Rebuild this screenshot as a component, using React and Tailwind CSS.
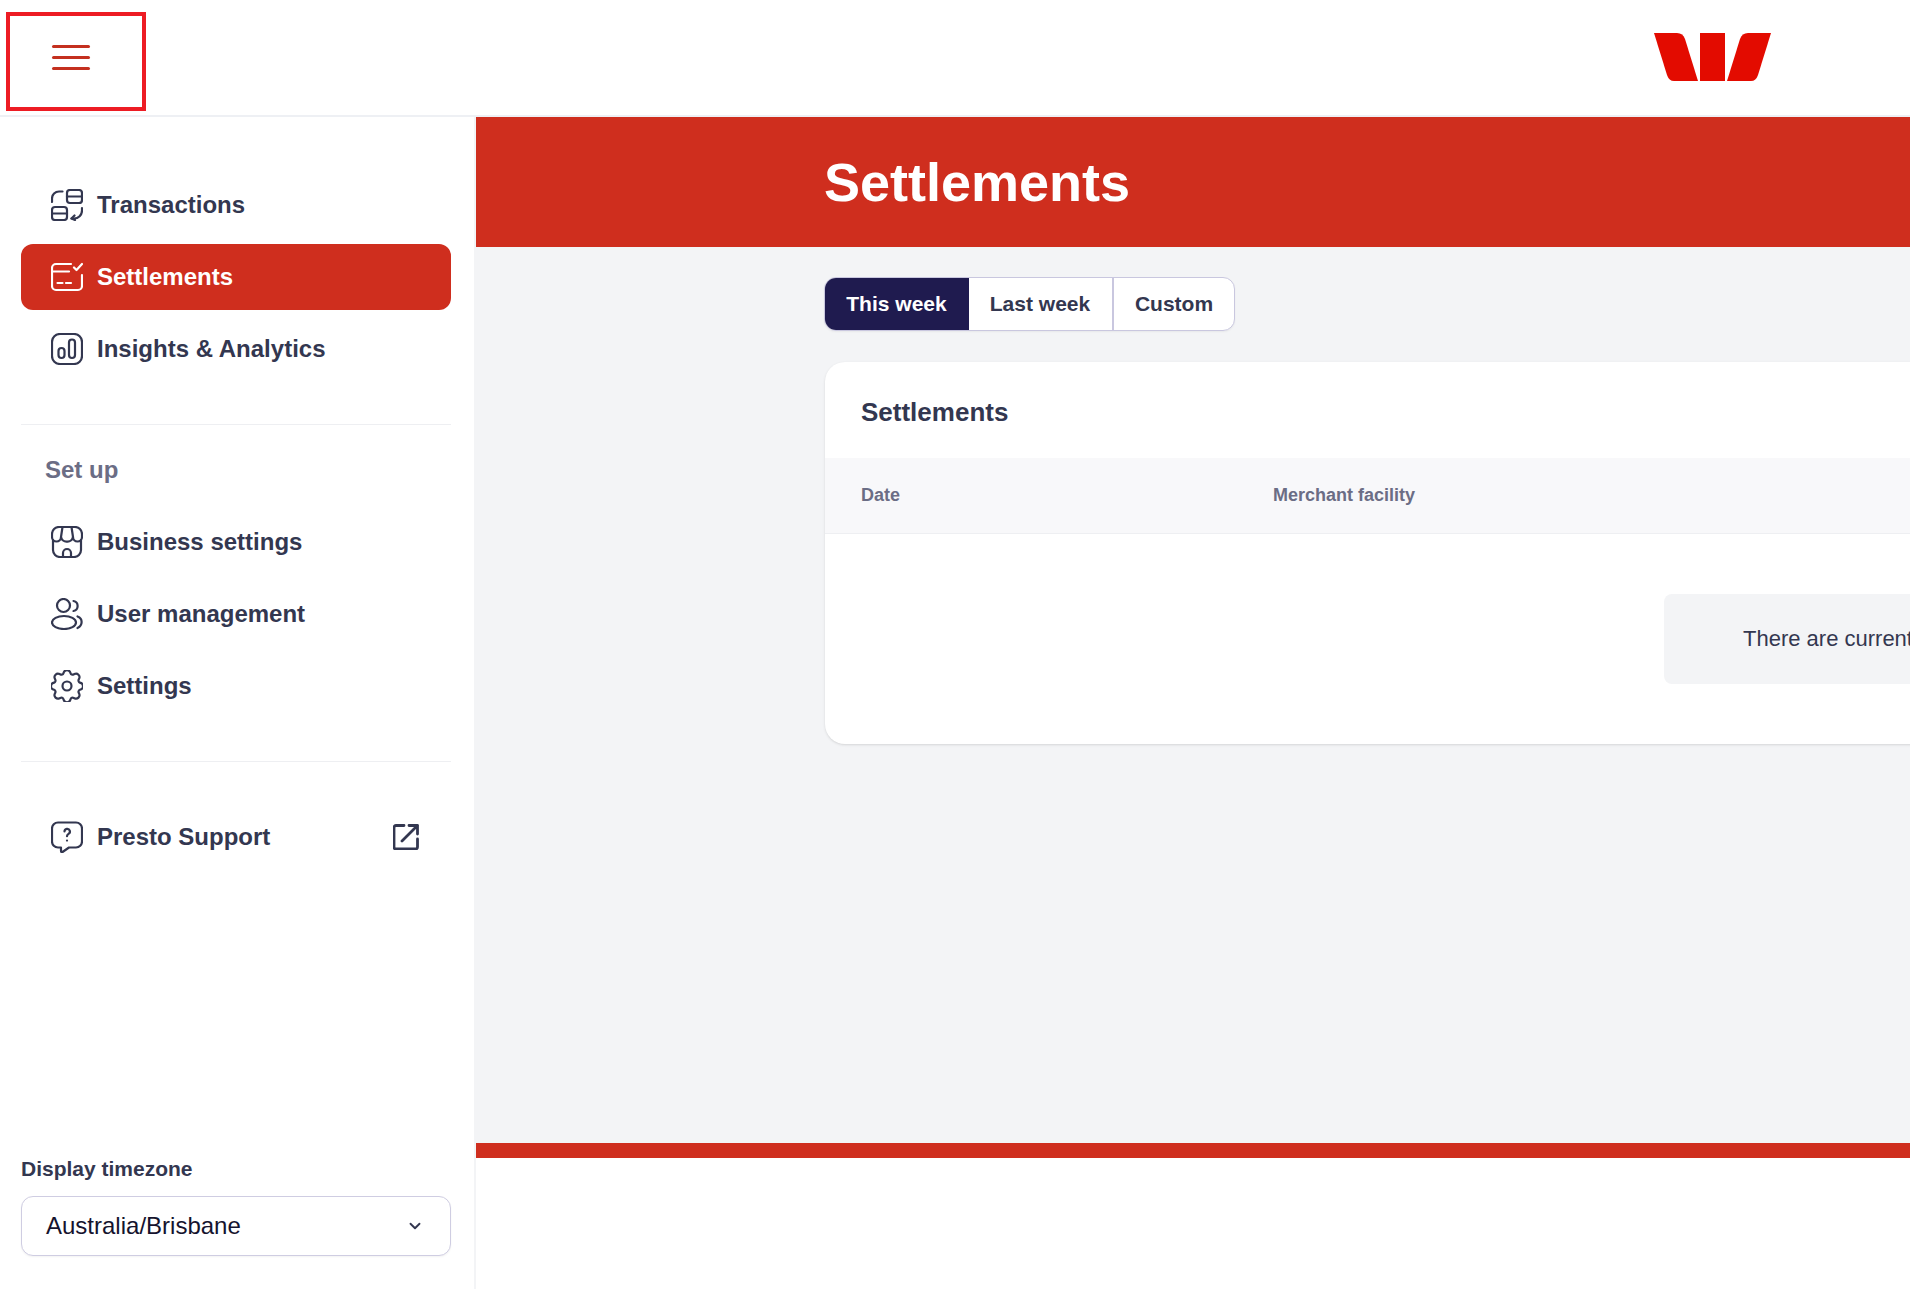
import React from "react";
import { ChevronDown } from "lucide-react";

const Ico = ({ children, className = "" }) => (
  <svg viewBox="0 0 32 32" fill="none" stroke="currentColor" strokeWidth="2.200" strokeLinecap="round" strokeLinejoin="round" className={"w-8 h-8 shrink-0 " + className}>
    {children}
  </svg>
);

const TransactionsIcon = () => (
  <Ico>
    <rect x="16" y="1" width="15" height="13" rx="3" />
    <path d="M16 7.500h15" />
    <rect x="1" y="18" width="15" height="13" rx="3" />
    <path d="M1 24.500h15" />
    <path d="M1 13V9.500a7 7 0 0 1 7-7h3.500" />
    <path d="M31 19v2.500a8 8 0 0 1-8 8h-2.500" />
    <path d="M23.500 26.500L20.500 29.500l3.500 1.500" />
  </Ico>
);
const SettlementsIcon = () => (
  <Ico>
    <path d="M20 3H5a4 4 0 0 0-4 4V25a4 4 0 0 0 4 4h22a4 4 0 0 0 4-4V14" />
    <path d="M1 10.500h17" />
    <path d="M6.500 22h5M15 22h5" />
    <path d="M23 6.500l2.500 2.500L31 3" />
  </Ico>
);
const InsightsIcon = () => (
  <Ico>
    <rect x="1" y="1" width="30" height="30" rx="8" />
    <rect x="7.500" y="15" width="6" height="10" rx="3" />
    <rect x="18" y="6.500" width="6" height="18.500" rx="3" />
  </Ico>
);
const BusinessIcon = () => (
  <Ico>
    <path d="M2 14v10a7 7 0 0 0 7 7h14a7 7 0 0 0 7-7V14" />
    <path d="M8 1h16a7 7 0 0 1 7 7v3a4.500 4.500 0 0 1-9 0 5.500 5.500 0 0 1-6 4.500 5.500 5.500 0 0 1-6-4.500 4.500 4.500 0 0 1-9 0V8a7 7 0 0 1 7-7z" />
    <path d="M10 11l1.500-10M22 11L20.500 1" />
    <path d="M12 31v-4a4 4 0 0 1 8 0v4" />
  </Ico>
);
const UsersIcon = () => (
  <Ico>
    <circle cx="12.500" cy="7.500" r="6.500" />
    <ellipse cx="13" cy="24.500" rx="12" ry="6.500" />
    <path d="M22.500 3c5.500 1 5.500 9 0 10" />
    <path d="M26.500 18.500c5.500 2 5.500 9 0 11.500" />
  </Ico>
);
const GearIcon = () => (
  <Ico>
    <path d="M12.700 2.500a3.500 3.500 0 0 1 6.600 0l.3.800a2.200 2.200 0 0 0 3 1.200l.8-.4a3.500 3.500 0 0 1 4.700 4.700l-.4.800a2.200 2.200 0 0 0 1.200 3l.8.300a3.500 3.500 0 0 1 0 6.600l-.8.300a2.200 2.200 0 0 0-1.200 3l.4.800a3.500 3.500 0 0 1-4.700 4.700l-.8-.4a2.200 2.200 0 0 0-3 1.200l-.3.800a3.500 3.500 0 0 1-6.600 0l-.3-.8a2.200 2.200 0 0 0-3-1.200l-.8.400a3.500 3.500 0 0 1-4.700-4.700l.4-.8a2.200 2.200 0 0 0-1.200-3l-.8-.3a3.500 3.500 0 0 1 0-6.600l.8-.3a2.200 2.200 0 0 0 1.200-3l-.4-.8a3.500 3.500 0 0 1 4.700-4.700l.8.400a2.200 2.200 0 0 0 3-1.200z" />
    <circle cx="16" cy="16" r="4.500" />
  </Ico>
);
const SupportIcon = () => (
  <Ico>
    <path d="M7 1.500h18a6 6 0 0 1 6 6v13a6 6 0 0 1-6 6h-7l-6.500 4.500c-.8.400-1.500 0-1.500-1v-3.500H7a6 6 0 0 1-6-6v-13a6 6 0 0 1 6-6z" />
    <path d="M13.500 10.500a2.700 2.700 0 1 1 4 2.400c-1 .6-1.500 1.100-1.500 2.300" />
    <path d="M16 19.500v.1" />
  </Ico>
);
const ExternalIcon = () => (
  <svg viewBox="0 0 26 26" fill="none" stroke="currentColor" strokeWidth="2.800" strokeLinecap="round" strokeLinejoin="round" className="w-[26px] h-[26px] shrink-0">
    <path d="M11 1.500H3a2 2 0 0 0-2 2V23a2 2 0 0 0 2 2h19.500a2 2 0 0 0 2-2V15" />
    <path d="M9 17L24.500 1.500M16 1.500h8.500V10" />
  </svg>
);

const Logo = () => (
  <svg viewBox="0 0 117 48" className="w-[117px] h-12" fill="#e30b00">
    <path d="M0 0H23Q29 0 31 6L44 48H20Q15 48 13 42Z" />
    <path d="M46 0H71V48H46Z" />
    <path d="M117 0H94Q88 0 86 6L73 48H97Q102 48 104 42Z" />
  </svg>
);

const Item = ({ icon, label, active, right }) => (
  <div className={"flex items-center h-[66px] pl-[30px] pr-8 rounded-xl " + (active ? "bg-[#cf2e1e] text-white" : "text-[#333750]")}>
    {icon}
    <span className="ml-[14px] text-[24px] leading-8 font-bold">{label}</span>
    {right && <span className="ml-auto">{right}</span>}
  </div>
);

export default function App() {
  return (
    <div className="relative w-[1910px] h-[1289px] overflow-hidden bg-white flex flex-col font-['Liberation_Sans',Arial,sans-serif]">
      <header className="h-[117px] shrink-0 flex items-center justify-between border-b-2 border-[#eef0f4] pr-[139px] pl-[52px]">
        <div className="flex flex-col gap-2 w-[38px]">
          <div className="h-[3px] rounded bg-[#c4301f]" />
          <div className="h-[3px] rounded bg-[#c4301f]" />
          <div className="h-[3px] rounded bg-[#c4301f]" />
        </div>
        <div className="-mt-[1px]"><Logo /></div>
      </header>

      <div className="flex flex-1 min-h-0">
        <aside className="w-[476px] shrink-0 border-r-2 border-[#f3f4f6] pl-[21px] pr-[23px] flex flex-col">
          <nav className="pt-[55px] flex flex-col gap-[6px]">
            <Item icon={<TransactionsIcon />} label="Transactions" />
            <Item icon={<SettlementsIcon />} label="Settlements" active />
            <Item icon={<InsightsIcon />} label="Insights & Analytics" />
          </nav>
          <div className="mt-[42px] h-px bg-[#eeeff2]" />
          <div className="mt-[29px] pl-6 text-[24px] leading-8 font-bold text-[#6b6d85]">Set up</div>
          <nav className="mt-[23px] flex flex-col gap-[6px]">
            <Item icon={<BusinessIcon />} label="Business settings" />
            <Item icon={<UsersIcon />} label="User management" />
            <Item icon={<GearIcon />} label="Settings" />
          </nav>
          <div className="mt-[42px] h-px bg-[#eeeff2]" />
          <div className="mt-[42px]">
            <Item icon={<SupportIcon />} label="Presto Support" right={<ExternalIcon />} />
          </div>
          <div className="mt-auto pb-[33px]">
            <div className="text-[21px] leading-7 font-bold text-[#333750]">Display timezone</div>
            <div className="mt-[13px] h-[60px] flex items-center justify-between pl-6 pr-[26px] rounded-xl border border-[#cfcde2] bg-white shadow-xs">
              <span className="text-[24px] text-[#15132e]">Australia/Brisbane</span>
              <ChevronDown className="w-[18px] h-[18px] text-[#333750]" strokeWidth={2.500} />
            </div>
          </div>
        </aside>

        <main className="flex-1 min-w-0 flex flex-col overflow-hidden">
          <div className="h-[130px] shrink-0 bg-[#cf2e1e] flex items-center pl-[348px]">
            <h1 className="text-[54px] leading-none font-bold text-white">Settlements</h1>
          </div>
          <div className="flex-1 bg-[#f3f4f6] pl-[349px] pt-[30px]">
            <div className="flex w-fit h-[54px] -ml-px rounded-xl border border-[#c9c7df] bg-white shadow-xs overflow-hidden text-[21px] font-bold text-[#333750]">
              <div className="w-[145px] -m-px flex items-center justify-center bg-[#1f1b4f] text-white">This week</div>
              <div className="w-[146px] flex items-center justify-center border-r-2 border-[#c9c7df]">Last week</div>
              <div className="w-[120px] flex items-center justify-center">Custom</div>
            </div>
            <div className="mt-[31px] w-[1700px] h-[382px] rounded-[20px] bg-white shadow-sm overflow-hidden">
              <div className="h-[96px] flex items-center pl-[36px] pt-[5px] text-[26px] font-bold text-[#333750]">Settlements</div>
              <div className="h-[76px] bg-[#f8f8fa] border-b border-[#eeeff2] flex items-center pl-[36px] text-[18px] font-bold text-[#6b6d85]">
                <div className="w-[412px]">Date</div>
                <div>Merchant facility</div>
              </div>
              <div className="pt-[60px] pl-[839px]">
                <div className="w-[700px] h-[90px] rounded-lg bg-[#f3f4f6] flex items-center pl-[79px] pb-[2px] text-[22px] text-[#333750]">
                  There are currently no settlements
                </div>
              </div>
            </div>
          </div>
          <div className="h-[15px] shrink-0 bg-[#cf2e1e]" />
          <div className="h-[131px] shrink-0 bg-white" />
        </main>
      </div>

      <div className="absolute left-[6px] top-[12px] w-[140px] h-[99px] border-4 border-[#ed1c24]" />
    </div>
  );
}
